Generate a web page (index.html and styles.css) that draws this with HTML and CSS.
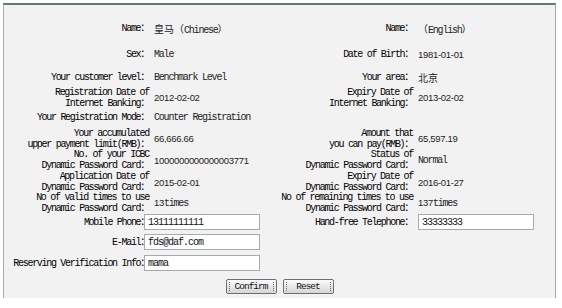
FILE: index.html
```html
<!DOCTYPE html>
<html lang="en">
<head>
    <meta charset="UTF-8">
    <title>Customer Information</title>
    <link rel="stylesheet" href="styles.css">
</head>
<body>
    <div class="panel">
        <div class="info">
            <!-- names -->
            <div class="lbl">Name：</div>
            <div class="val"><span class="cjk">皇马</span><span class="cjk">（</span>Chinese<span class="cjk">）</span></div>
            <div class="lbl">Name：</div>
            <div class="val"><span class="cjk">（</span>English<span class="cjk">）</span></div>

            <div class="lbl">Sex：</div>
            <div class="val">Male</div>
            <div class="lbl">Date of Birth：</div>
            <div class="val num">1981-01-01</div>

            <div class="lbl">Your customer level：</div>
            <div class="val">Benchmark Level</div>
            <div class="lbl">Your area：</div>
            <div class="val"><span class="cjk">北京</span></div>

            <div class="lbl">Registration Date of<br>Internet Banking：</div>
            <div class="val num">2012-02-02</div>
            <div class="lbl">Expiry Date of<br>Internet Banking：</div>
            <div class="val num">2013-02-02</div>

            <div class="lbl">Your Registration Mode：</div>
            <div class="val">Counter Registration</div>
            <div class="lbl"></div>
            <div class="val"></div>

            <div class="lbl">Your accumulated<br>upper payment limit(RMB)：</div>
            <div class="val num">66,666.66</div>
            <div class="lbl">Amount that<br>you can pay(RMB)：</div>
            <div class="val num">65,597.19</div>

            <div class="lbl">No. of your ICBC<br>Dynamic Password Card：</div>
            <div class="val num">1000000000000003771</div>
            <div class="lbl">Status of<br>Dynamic Password Card：</div>
            <div class="val">Normal</div>

            <div class="lbl">Application Date of<br>Dynamic Password Card：</div>
            <div class="val num">2015-02-01</div>
            <div class="lbl">Expiry Date of<br>Dynamic Password Card：</div>
            <div class="val num">2016-01-27</div>

            <div class="lbl">No of valid times to use<br>Dynamic Password Card：</div>
            <div class="val"><span class="num">13</span>times</div>
            <div class="lbl">No of remaining times to use<br>Dynamic Password Card：</div>
            <div class="val"><span class="num">137</span>times</div>

            <!-- editable fields -->
            <div class="lbl">Mobile Phone：</div>
            <div class="field"><input type="text" value="13111111111"></div>
            <div class="lbl">Hand-free Telephone：</div>
            <div class="field right"><input type="text" value="33333333"></div>

            <div class="lbl">E-Mail：</div>
            <div class="field"><input type="text" value="fds@daf.com"></div>
            <div class="lbl"></div>
            <div class="val"></div>

            <div class="lbl">Reserving Verification Info：</div>
            <div class="field"><input type="text" value="mama"></div>
            <div class="lbl"></div>
            <div class="val"></div>
        </div>

        <div class="actions">
            <button class="btn">Confirm</button>
            <button class="btn">Reset</button>
        </div>
    </div>
</body>
</html>
```

FILE: styles.css
```css
body {
    margin: 3px;
    background: #fff;
    font-family: "Liberation Mono", "Noto Sans CJK SC", monospace;
    font-size: 10px;
    color: #000;
    text-spacing-trim: space-all;
}
.panel {
    width: 551px;
    background: #f2f2f2;
    border-top: 2px solid #5f7a70;
    border-left: 1px solid #a9a9a9;
    border-right: 1px solid #a9a9a9;
}
.info {
    display: grid;
    grid-template-columns: 147px 124px 140px 1fr;
    grid-template-rows: 27px 25px 21px 19px 21px 21px 22px 22px 19px 20px 20px 22px;
    align-items: center;
    padding-top: 10px;
}
.lbl {
    padding-right: 2px;
    text-align: right;
    line-height: 11px;
    letter-spacing: -1.3px;
    white-space: nowrap;
}
.val {
    padding-left: 3px;
    letter-spacing: -1.2px;
    color: #222;
    white-space: nowrap;
}
.num {
    font-family: "Liberation Sans", sans-serif;
    font-size: 9.5px;
    letter-spacing: -0.3px;
}
.cjk {
    font-family: "Noto Sans CJK SC", sans-serif;
    letter-spacing: 0;
}
.field input {
    width: 116px;
    height: 16px;
    box-sizing: border-box;
    margin-left: -7px;
    padding: 0 3px;
    border: 1px solid #a3aab4;
    background: #fff;
    font-family: "Liberation Mono", monospace;
    font-size: 10px;
    letter-spacing: -1px;
    color: #111;
}
.field.right input {
    margin-left: 3px;
}
.actions {
    display: flex;
    justify-content: center;
    align-items: center;
    gap: 6px;
    height: 24px;
}
.btn {
    position: relative;
    width: 51px;
    height: 15px;
    padding: 0;
    border: 1px solid #6e6e6e;
    border-radius: 2px;
    background: linear-gradient(#fbfbfb, #d6d6d6);
    font-family: "Liberation Mono", monospace;
    font-size: 9.5px;
    letter-spacing: -1px;
    color: #111;
    line-height: 13px;
}
.btn::before, .btn::after {
    content: "";
    position: absolute;
    top: 2px;
    bottom: 2px;
    border-left: 1px dotted #666;
}
.btn::before {
    left: 2px;
}
.btn::after {
    right: 2px;
}
```
